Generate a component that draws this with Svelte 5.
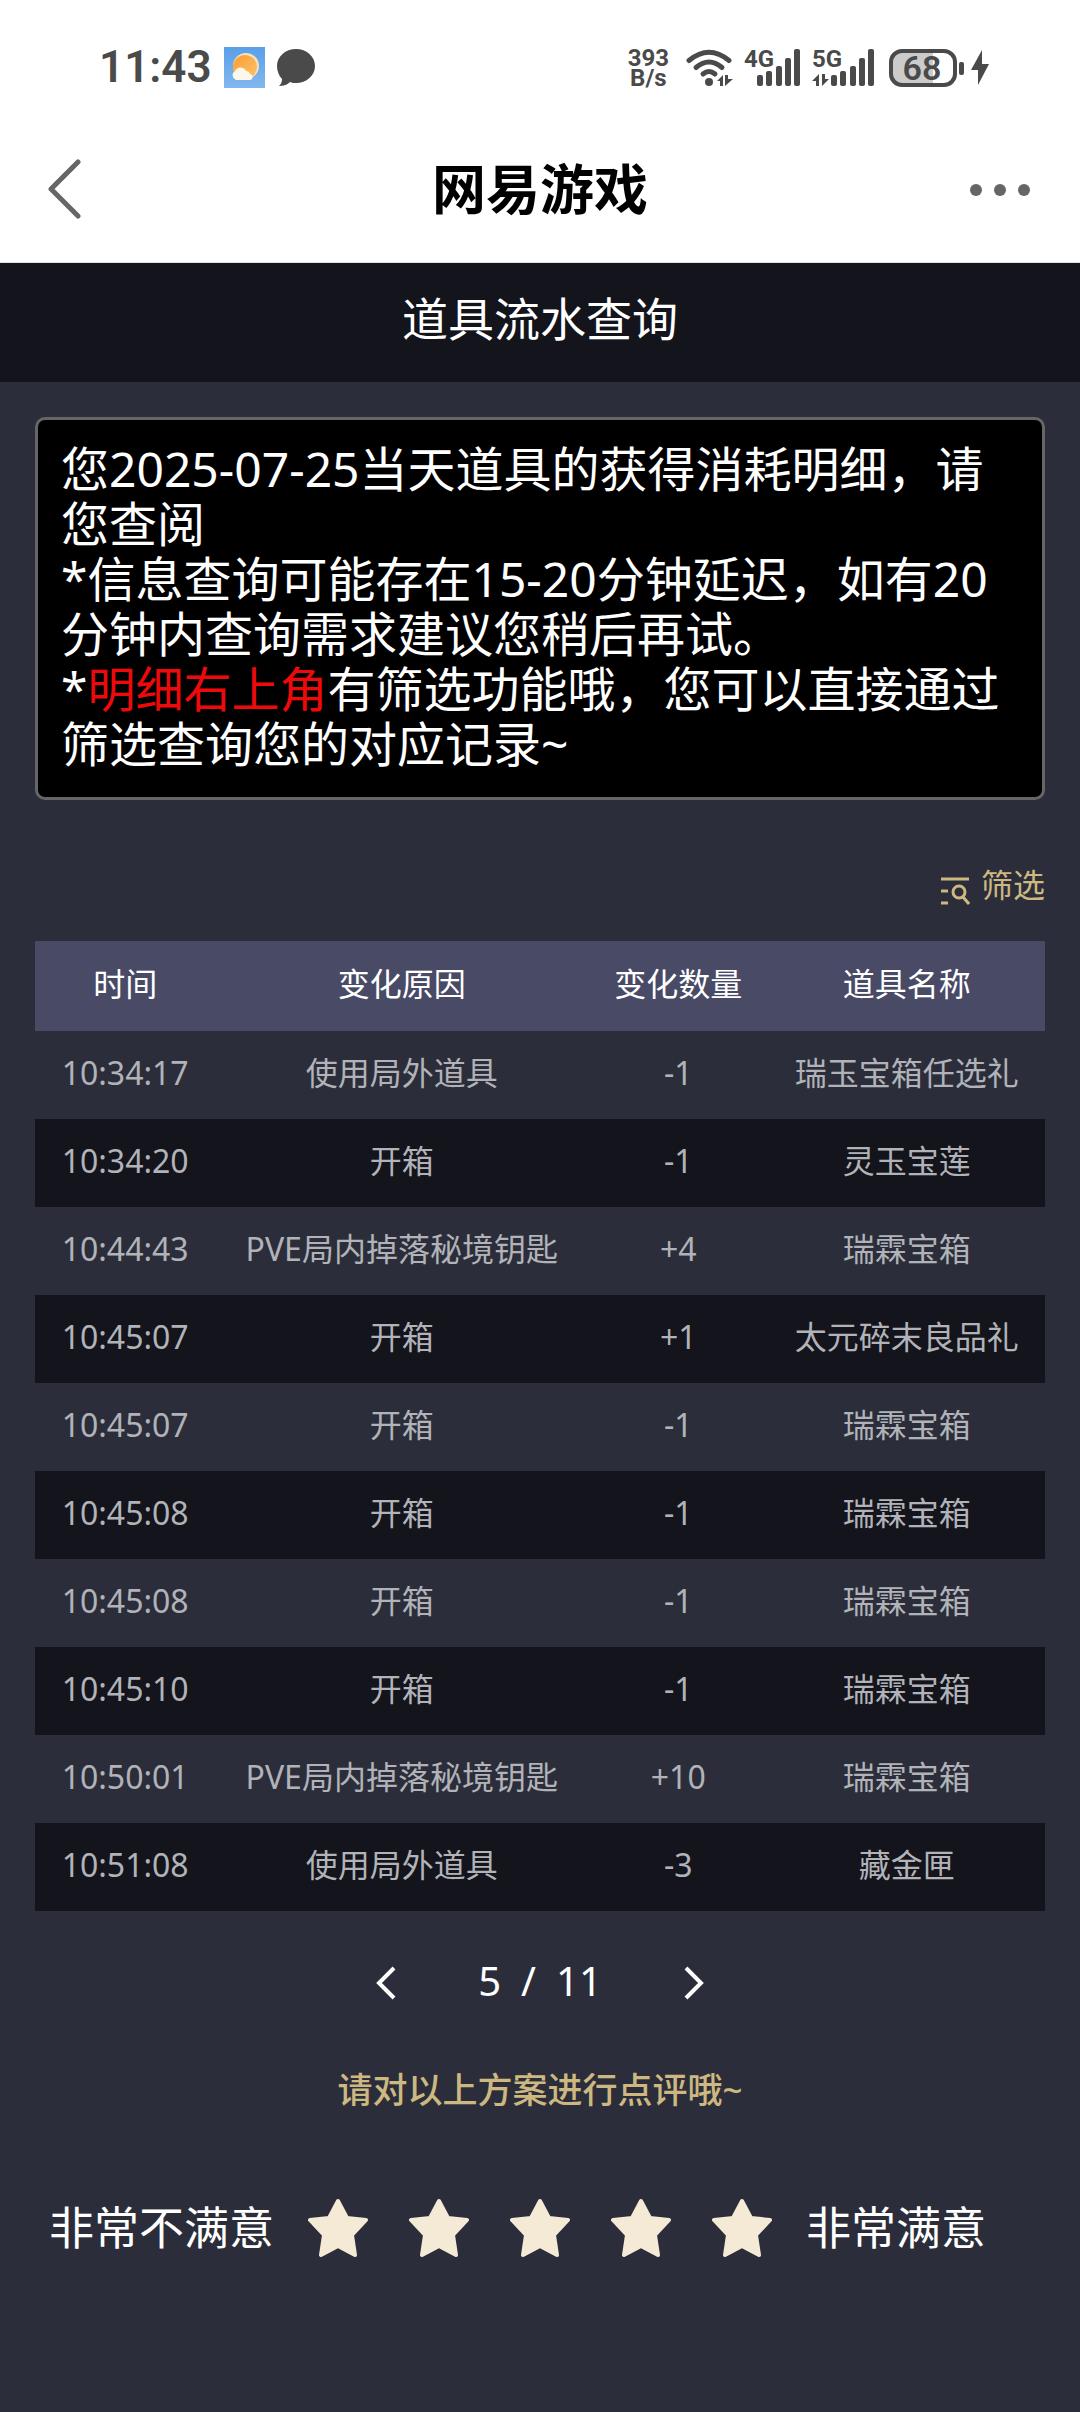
<script lang="ts">
  type Row = { time: string; reason: string; count: string; item: string };

  const rows: Row[] = [
    { time: "10:34:17", reason: "使用局外道具", count: "-1", item: "瑞玉宝箱任选礼" },
    { time: "10:34:20", reason: "开箱", count: "-1", item: "灵玉宝莲" },
    { time: "10:44:43", reason: "PVE局内掉落秘境钥匙", count: "+4", item: "瑞霖宝箱" },
    { time: "10:45:07", reason: "开箱", count: "+1", item: "太元碎末良品礼" },
    { time: "10:45:07", reason: "开箱", count: "-1", item: "瑞霖宝箱" },
    { time: "10:45:08", reason: "开箱", count: "-1", item: "瑞霖宝箱" },
    { time: "10:45:08", reason: "开箱", count: "-1", item: "瑞霖宝箱" },
    { time: "10:45:10", reason: "开箱", count: "-1", item: "瑞霖宝箱" },
    { time: "10:50:01", reason: "PVE局内掉落秘境钥匙", count: "+10", item: "瑞霖宝箱" },
    { time: "10:51:08", reason: "使用局外道具", count: "-3", item: "藏金匣" },
  ];

  const total = 11;
  let page = $state(5);
  let score = $state(0);

  // left edge and top of each signal bar
  const bars = [[13, 27], [22, 23], [32, 18], [41, 10], [50, 1]];
</script>

{#snippet signal(label: string, arrows: boolean)}
  <svg class="signal" width="57" height="40" viewBox="0 0 57 40" role="img" aria-label={label}>
    <text x="0" y="19">{label}</text>
    {#each bars as [x, y]}
      <rect x={arrows ? x + 6 : x} {y} width="6" height={38 - y} rx="2" />
    {/each}
    {#if arrows}
      <path d="M0 33l7-7v12H4v-5zM10 38V26h3v5h4z" />
    {/if}
  </svg>
{/snippet}

<div class="screen">
  <div class="status">
    <span class="clock">11:43</span>
    <svg class="weather" width="41" height="41" viewBox="0 0 41 41" aria-hidden="true">
      <defs>
        <linearGradient id="sky" x1="0" y1="0" x2="0" y2="1">
          <stop offset="0" stop-color="#5a9fe8" />
          <stop offset="1" stop-color="#82b8ee" />
        </linearGradient>
        <linearGradient id="sun" x1="0" y1="0" x2="1" y2="1">
          <stop offset="0" stop-color="#fb9c33" />
          <stop offset="1" stop-color="#fcc46a" />
        </linearGradient>
      </defs>
      <rect width="41" height="41" fill="url(#sky)" />
      <circle cx="22" cy="19" r="13" fill="#f6e3b8" />
      <circle cx="21" cy="20" r="12" fill="url(#sun)" />
      <path d="M12 33a5 5 0 0 1-1-9 6 6 0 0 1 11 0 4 4 0 0 1 4 3 3 3 0 0 1-1 6z" fill="#fdf6ea" />
    </svg>
    <svg width="38" height="38" viewBox="0 0 38 38" aria-hidden="true">
      <path d="M19 0c10.500 0 19 7.500 19 17S29.500 34 19 34c-2 0-4 0-6-1-3 3-7 4-11 4 2-2 3-4 3-7-3-3-5-8-5-13C0 7.500 8.500 0 19 0z" fill="#4a4a4a" />
    </svg>
    <span class="spacer"></span>
    <span class="speed"><span>393</span><span>B/s</span></span>
    <svg class="wifi" width="47" height="38" viewBox="0 0 47 38" aria-hidden="true">
      <g fill="none" stroke="#4a4a4a" stroke-width="5" stroke-linecap="round">
        <path d="M3 11.500Q23 -5 43 11.500" />
        <path d="M10 18.500Q23 7.500 36 18.500" />
        <path d="M17 25Q23 20 29 25" />
      </g>
      <circle cx="23" cy="33" r="4" fill="#4a4a4a" />
      <path d="M31 32l6-6v11h-3v-5zM39 37V26h3v4h5z" fill="#4a4a4a" />
    </svg>
    {@render signal("4G", false)}
    <span class="second">{@render signal("5G", true)}</span>
    <svg class="battery" width="101" height="38" viewBox="0 0 101 38" role="img" aria-label="68%">
      <path d="M12 2h32v34H12a10 10 0 0 1-10-10V12A10 10 0 0 1 12 2z" fill="#cbcbcb" />
      <rect x="2" y="2" width="64" height="34" rx="11" fill="none" stroke="#4a4a4a" stroke-width="4" />
      <rect x="70" y="13" width="5" height="13" rx="2" fill="#4a4a4a" />
      <path d="M93 1L82 21h7v15l11-21h-7z" fill="#4a4a4a" />
      <text x="33" y="31" text-anchor="middle">68</text>
    </svg>
  </div>

  <header class="nav">
    <button class="icon-btn" aria-label="返回">
      <svg width="36" height="62" viewBox="0 0 36 62" fill="none" stroke="#666" stroke-width="5" stroke-linecap="round" stroke-linejoin="round"><path d="M30 4L3 31l27 27" /></svg>
    </button>
    <h1>网易游戏</h1>
    <button class="icon-btn" aria-label="更多">
      <svg width="62" height="14" viewBox="0 0 62 14" fill="#666"><circle cx="6" cy="8" r="6" /><circle cx="30" cy="8" r="6" /><circle cx="54" cy="8" r="6" /></svg>
    </button>
  </header>

  <h2 class="title">道具流水查询</h2>

  <main>
    <div class="notice">
      <p>您2025-07-25当天道具的获得消耗明细，请您查阅</p>
      <p>*信息查询可能存在15-20分钟延迟，如有20分钟内查询需求建议您稍后再试。</p>
      <p>*<em>明细右上角</em>有筛选功能哦，您可以直接通过筛选查询您的对应记录~</p>
    </div>

    <button class="filter">
      <svg width="29" height="28" viewBox="0 0 29 28" fill="none" stroke="currentColor" stroke-width="3" aria-hidden="true">
        <path d="M0 2h28M0 14h7M0 26h7" />
        <circle cx="18" cy="15" r="6" />
        <path d="M22 20l6 7" />
      </svg>
      筛选
    </button>

    <table>
      <colgroup>
        <col class="c-time" />
        <col class="c-reason" />
        <col class="c-count" />
        <col class="c-item" />
      </colgroup>
      <thead>
        <tr><th>时间</th><th>变化原因</th><th>变化数量</th><th>道具名称</th></tr>
      </thead>
      <tbody>
        {#each rows as row}
          <tr>
            <td>{row.time}</td>
            <td>{row.reason}</td>
            <td>{row.count}</td>
            <td>{row.item}</td>
          </tr>
        {/each}
      </tbody>
    </table>

    <div class="pager">
      <button class="icon-btn" aria-label="上一页" onclick={() => (page = Math.max(1, page - 1))}>
        <svg width="22" height="34" viewBox="0 0 22 34" fill="none" stroke="#fff" stroke-width="4"><path d="M20 2L5 17l15 15" /></svg>
      </button>
      <span class="pages"><span>{page}</span><span>/</span><span>{total}</span></span>
      <button class="icon-btn" aria-label="下一页" onclick={() => (page = Math.min(total, page + 1))}>
        <svg width="22" height="34" viewBox="0 0 22 34" fill="none" stroke="#fff" stroke-width="4"><path d="M2 2l15 15L2 32" /></svg>
      </button>
    </div>

    <p class="prompt">请对以上方案进行点评哦~</p>

    <div class="rating">
      <span>非常不满意</span>
      <div class="stars">
        {#each [1, 2, 3, 4, 5] as n}
          <button class="icon-btn" aria-label="{n}星" aria-pressed={score === n} onclick={() => (score = n)}>
            <svg width="60" height="60" viewBox="0 0 60 60" fill="#f4ead5" stroke="#f4ead5" stroke-width="4" stroke-linejoin="round"><path d="M30 3l9 17 19 2-14 15 3 20-17-9-17 9 3-20L2 22l19-2z" /></svg>
          </button>
        {/each}
      </div>
      <span>非常满意</span>
    </div>
  </main>
</div>

<style>
  :global(body) {
    margin: 0;
    background: #2b2e3a;
  }
  .screen {
    min-height: 100vh;
    background: #2b2e3a;
    color: #fff;
    font-family: "Noto Sans", "Noto Sans CJK SC", sans-serif;
  }
  h1, h2, p {
    margin: 0;
  }
  button {
    border: none;
    padding: 0;
    background: transparent;
    color: inherit;
    font: inherit;
    cursor: pointer;
  }
  .icon-btn {
    display: flex;
    align-items: center;
    justify-content: center;
  }
  .status {
    display: flex;
    align-items: center;
    padding: 47px 90px 28px 99px;
    background: #fff;
    color: #4a4a4a;
    font-family: Roboto, sans-serif;
  }
  .clock {
    font-size: 44px;
    line-height: 41px;
    font-weight: 600;
  }
  .weather {
    margin: 0 12px;
  }
  .spacer {
    flex: 1;
  }
  .speed {
    display: flex;
    flex-direction: column;
    font-size: 24px;
    line-height: 20px;
    font-weight: 700;
    text-align: center;
  }
  .wifi {
    margin: 0 11px 0 17px;
  }
  .signal {
    overflow: visible;
    fill: #4a4a4a;
    font-size: 24px;
    font-weight: 700;
  }
  .second {
    display: flex;
    margin: 0 20px 0 11px;
  }
  .battery {
    overflow: visible;
  }
  .battery text {
    fill: #4a4a4a;
    font-size: 34px;
    font-weight: 600;
  }
  .nav {
    display: flex;
    align-items: center;
    justify-content: space-between;
    height: 146px;
    padding: 0 48px;
    background: #fff;
    border-bottom: 1px solid #dde0e6;
  }
  .nav .icon-btn {
    width: 62px;
  }
  .nav .icon-btn:first-child {
    justify-content: flex-start;
  }
  h1 {
    color: #000;
    font-size: 54px;
    line-height: 64px;
    font-weight: 700;
  }
  .title {
    background: #13141c;
    font-size: 46px;
    line-height: 110px;
    padding-bottom: 9px;
    font-weight: 400;
    text-align: center;
  }
  main {
    display: flex;
    flex-direction: column;
    padding: 35px;
  }
  .notice {
    padding: 21px 23px 26px;
    border: 3px solid #666;
    border-radius: 10px;
    background: #000;
    font-size: 48px;
    line-height: 55px;
  }
  .notice em {
    color: #ee0a0a;
    font-style: normal;
  }
  .filter {
    display: flex;
    align-items: flex-end;
    align-self: flex-end;
    gap: 11px;
    margin: 65px 0 36px;
    color: #cdb881;
    font-size: 32px;
    line-height: 40px;
  }
  table {
    width: 100%;
    table-layout: fixed;
    border-collapse: collapse;
    font-size: 32px;
    line-height: 40px;
    text-align: center;
  }
  .c-time, .c-count {
    width: 180px;
  }
  .c-reason {
    width: 372px;
  }
  .c-item {
    width: 276px;
  }
  th, td {
    padding: 22px 0 26px;
    white-space: nowrap;
  }
  th {
    padding: 23px 0 27px;
    background: #484a66;
    font-weight: 400;
  }
  td {
    color: #b1b3b8;
  }
  tbody tr:nth-child(even) {
    background: #13141c;
  }
  .pager {
    display: flex;
    align-items: flex-end;
    justify-content: center;
    gap: 82px;
    margin-top: 46px;
    font-size: 40px;
    line-height: 48px;
  }
  .pager .icon-btn {
    height: 44px;
  }
  .pages {
    display: flex;
    gap: 20px;
  }
  .prompt {
    margin-top: 61px;
    color: #cdb881;
    font-size: 35px;
    line-height: 48px;
    font-weight: 500;
    text-align: center;
  }
  .rating {
    display: flex;
    align-items: center;
    gap: 34px;
    margin: 84px 0 0 14px;
    font-size: 45px;
    line-height: 60px;
  }
  .stars {
    display: flex;
    gap: 41px;
  }
</style>
